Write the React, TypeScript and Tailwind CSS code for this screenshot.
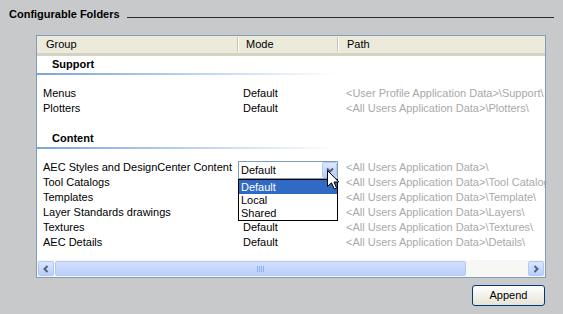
import React from "react";

type Row = { name: string; mode: string; path: string; combo?: boolean };

const support: Row[] = [
    { name: "Menus", mode: "Default", path: "<User Profile Application Data>\\Support\\" },
    { name: "Plotters", mode: "Default", path: "<All Users Application Data>\\Plotters\\" },
];

// mode cells under the open combo are hidden by the dropdown, so left empty
const content: Row[] = [
    { name: "AEC Styles and DesignCenter Content", mode: "", path: "<All Users Application Data>\\", combo: true },
    { name: "Tool Catalogs", mode: "", path: "<All Users Application Data>\\Tool Catalogs\\" },
    { name: "Templates", mode: "", path: "<All Users Application Data>\\Template\\" },
    { name: "Layer Standards drawings", mode: "", path: "<All Users Application Data>\\Layers\\" },
    { name: "Textures", mode: "Default", path: "<All Users Application Data>\\Textures\\" },
    { name: "AEC Details", mode: "Default", path: "<All Users Application Data>\\Details\\" },
];

const Cursor = () => (
    <svg width="13" height="20" viewBox="0 0 13 20" className="absolute left-[88px] top-[8px] z-30">
        <path
            d="M0.5 0.5 L0.5 16.5 L4.5 12.8 L7.3 19 L9.6 18 L7 12 L11.8 12 Z"
            fill="white"
            stroke="black"
            strokeWidth="1"
            strokeLinejoin="miter"
        />
    </svg>
);

const Combo = () => (
    <div className="absolute left-[1px] top-[1px] z-20 w-[100px]">
        <div className="relative h-[18px] border border-[#7f9db9] bg-white flex items-center pl-[2px]">
            Default
            <div className="absolute right-0 top-0 w-[15px] h-[16px] rounded-[2px] border border-[#b4c8f6] bg-gradient-to-b from-[#dde8fe] to-[#b6cbf9] flex items-center justify-center">
                <svg width="8" height="6" viewBox="0 0 8 6">
                    <path d="M1 1.5 L4 4.5 L7 1.5" fill="none" stroke="#4d6185" strokeWidth="2" />
                </svg>
            </div>
            <Cursor />
        </div>
        <div className="border border-black bg-white">
            <div className="h-[14px] bg-[#316ac5] text-white pl-[2px] flex items-center">Default</div>
            <div className="h-[13px] pl-[2px] flex items-center">Local</div>
            <div className="h-[13px] pl-[2px] flex items-center">Shared</div>
        </div>
    </div>
);

const GroupHeader = ({ label }: { label: string }) => (
    <div>
        <div className="h-[17px] flex items-center pl-[15px] font-bold">{label}</div>
        <div className="h-[2px] w-[300px] bg-gradient-to-r from-[#7ba4dc] via-[#b9d0ef] to-white" />
    </div>
);

const RowLine = ({ row }: { row: Row }) => (
    <div className="flex h-[15px] items-center whitespace-nowrap">
        <div className="w-[200px] shrink-0 pl-[6px]">{row.name}</div>
        <div className="relative w-[100px] shrink-0 pl-[6px] h-full flex items-center">
            {row.mode}
            {row.combo && <Combo />}
        </div>
        <div className="shrink-0 pl-[9px] text-[#a9a9a9]">{row.path}</div>
    </div>
);

const Sep = () => <div className="w-[2px] h-[15px] border-l border-[#c7c5b2] border-r border-r-white" />;

const ScrollButton = ({ dir }: { dir: "left" | "right" }) => (
    <div className="w-[16px] h-[15px] rounded-[2px] border border-[#b4c8f6] bg-gradient-to-b from-[#dce7fd] to-[#b8cdf9] flex items-center justify-center">
        <svg width="6" height="8" viewBox="0 0 6 8">
            <path
                d={dir === "left" ? "M4.5 1 L1.5 4 L4.5 7" : "M1.5 1 L4.5 4 L1.5 7"}
                fill="none"
                stroke="#4d6185"
                strokeWidth="2"
            />
        </svg>
    </div>
);

export default function App() {
    return (
        <div className="w-[563px] h-[314px] bg-[#c8c9cb] overflow-hidden pt-[7px] font-['Liberation_Sans',Arial,sans-serif] text-[11px] leading-[13px] text-black">
            <div className="h-[14px] flex items-center pl-[9px]">
                <span className="font-bold">Configurable Folders</span>
                <div className="flex-1 self-end mb-[3px] ml-[7px] mr-[9px] h-px bg-[#2a2a2a]" />
            </div>

            <div className="ml-[36px] mt-[14px] w-[510px] h-[243px] border border-[#7f9db9] bg-white flex flex-col">
                <div className="h-[20px] shrink-0 bg-[#ebeadb] border-b-[3px] border-[#d6d2c2] flex items-center">
                    <div className="w-[200px] pl-[9px]">Group</div>
                    <Sep />
                    <div className="w-[98px] pl-[7px]">Mode</div>
                    <Sep />
                    <div className="pl-[8px]">Path</div>
                </div>

                <div className="flex-1 overflow-hidden">
                    <GroupHeader label="Support" />
                    <div className="mt-[11px]">
                        {support.map((r) => (
                            <RowLine key={r.name} row={r} />
                        ))}
                    </div>
                    <div className="mt-[14px]">
                        <GroupHeader label="Content" />
                    </div>
                    <div className="mt-[11px]">
                        {content.map((r) => (
                            <RowLine key={r.name} row={r} />
                        ))}
                    </div>
                </div>

                <div className="h-[17px] shrink-0 bg-[#f7f7f3] flex items-center px-[1px] gap-[1px]">
                    <ScrollButton dir="left" />
                    <div className="w-[411px] h-[15px] rounded-[2px] border border-[#b4c8f6] bg-gradient-to-b from-[#d2defd] to-[#bccffa] flex items-center justify-center gap-[1px]">
                        {[0, 1, 2, 3].map((i) => (
                            <div key={i} className="w-[1px] h-[6px] bg-[#eef4fe] border-r border-[#8cb0f8]" />
                        ))}
                    </div>
                    <div className="flex-1" />
                    <ScrollButton dir="right" />
                </div>
            </div>

            <div className="flex justify-end mr-[18px] mt-[7px]">
                <button className="w-[73px] h-[21px] rounded-[3px] border border-[#003c74] bg-gradient-to-b from-white to-[#e6e3d6] text-[11px] text-black">
                    Append
                </button>
            </div>
        </div>
    );
}
